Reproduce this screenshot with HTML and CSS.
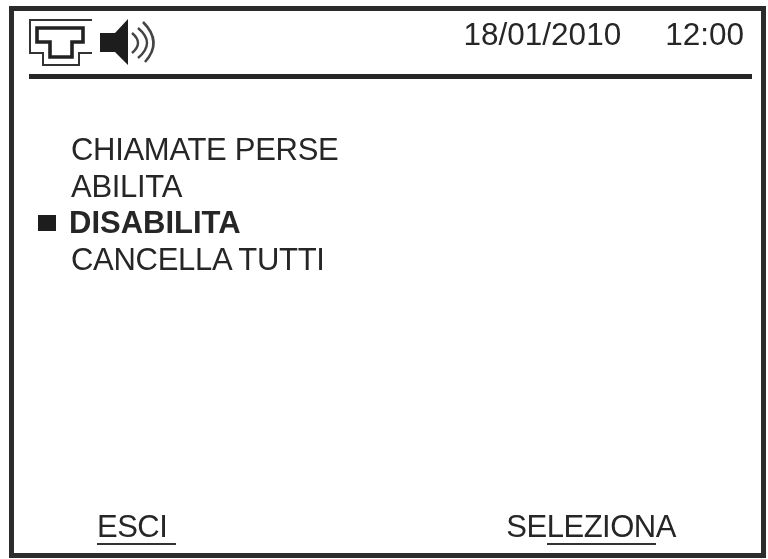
FILE: index.html
```html
<!DOCTYPE html>
<html lang="en">
  <head>
    <meta charset="UTF-8" />
    <meta name="viewport" content="width=device-width, initial-scale=1.0" />
    <title>Chiamate perse</title>
    <link rel="stylesheet" href="styles.css">
  </head>
  <body>
    <div class="screen">
      <!-- Status bar -->
      <div class="status">
        <svg class="status-icons" viewBox="0 0 140 50" width="140" height="50">
          <path d="M63 3H1V36H14V48H50V36H63" fill="none" stroke="#333" stroke-width="2" />
          <path d="M8 11H54V25H43V40H21V25H8Z" fill="none" stroke="#222" stroke-width="3.6" />
          <path d="M71 16H86L99 2V48L86 35H71Z" fill="#1d1d1d" />
          <path d="M103 16Q115 26 103 36" fill="none" stroke="#444" stroke-width="2.4" />
          <path d="M109 11Q127 26 109 41" fill="none" stroke="#444" stroke-width="2.4" />
          <path d="M114 5Q134 25 116 45" fill="none" stroke="#444" stroke-width="2.6" />
        </svg>
        <div class="clock">
          <span>18/01/2010</span>
          <span>12:00</span>
        </div>
      </div>

      <!-- Menu -->
      <div class="menu">
        <div class="menu-item">CHIAMATE PERSE</div>
        <div class="menu-item">ABILITA</div>
        <div class="menu-item selected">DISABILITA</div>
        <div class="menu-item">CANCELLA TUTTI</div>
      </div>

      <!-- Soft keys -->
      <div class="softkeys">
        <span class="softkey-left">ESCI</span>
        <span class="softkey-right">SE<span class="softkey-line">LEZION</span>A</span>
      </div>
    </div>
  </body>
</html>
```

FILE: styles.css
```css
html,
body {
  height: 100%;
}
body {
  margin: 0;
  padding: 6px 0 1px 9px;
  box-sizing: border-box;
  background-color: #fff;
  font-family: "Liberation Sans", Arial, sans-serif;
  color: #262626;
  overflow: hidden;
}
.screen {
  width: 757px;
  height: 552px;
  box-sizing: border-box;
  border: 5px solid #2b2b2b;
  display: flex;
  flex-direction: column;
  filter: blur(0.5px);
}
.status {
  height: 68px;
  margin-left: 15px;
  margin-right: 9px;
  border-bottom: 5px solid #262626;
  box-sizing: border-box;
  display: flex;
  justify-content: space-between;
  flex-shrink: 0;
}
.status-icons {
  display: block;
  margin-top: 6px;
}
.clock {
  display: flex;
  gap: 44px;
  font-size: 31.5px;
  line-height: 36px;
  margin-top: 5px;
  margin-right: 8px;
}
.menu {
  padding-top: 53px;
  padding-left: 57px;
  flex: 1;
}
.menu-item {
  font-size: 31px;
  line-height: 36.6px;
  letter-spacing: -0.3px;
}
.selected {
  font-weight: bold;
  letter-spacing: 0;
  margin-left: -2px;
  position: relative;
}
.selected::before {
  content: "";
  position: absolute;
  left: -31px;
  top: 10px;
  width: 18px;
  height: 16px;
  background-color: #1d1d1d;
}
.softkeys {
  height: 44px;
  display: flex;
  font-size: 31px;
  line-height: 36px;
  letter-spacing: -0.5px;
  flex-shrink: 0;
}
.softkey-left {
  margin-left: 83px;
  padding-right: 9px;
  height: 34px;
  border-bottom: 2px solid #333;
}
.softkey-right {
  margin-left: 330px;
}
.softkey-line {
  display: inline-block;
  height: 34px;
  border-bottom: 2px solid #333;
}
```
